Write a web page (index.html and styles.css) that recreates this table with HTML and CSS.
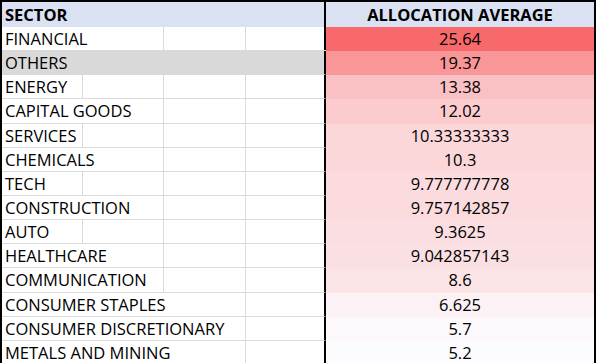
FILE: index.html
```html
<!DOCTYPE html>
<html>
<head>
<meta charset="utf-8">
<link rel="stylesheet" href="styles.css">
</head>
<body>
<div class="sheet">
  <div class="row head">
    <div class="left">
      <div class="cell span4 bold">SECTOR</div>
    </div>
    <div class="val bold">ALLOCATION AVERAGE</div>
  </div>

  <div class="row">
    <div class="left"><div class="cell span2">FINANCIAL</div><div class="cell c"></div><div class="cell d"></div></div>
    <div class="val" style="background:#F8696B">25.64</div>
  </div>
  <div class="row">
    <div class="left fill-gray"><div class="cell span4">OTHERS</div></div>
    <div class="val" style="background:#F99698">19.37</div>
  </div>
  <div class="row">
    <div class="left"><div class="cell a">ENERGY</div><div class="cell b"></div><div class="cell c"></div><div class="cell d"></div></div>
    <div class="val" style="background:#FAC1C4">13.38</div>
  </div>
  <div class="row">
    <div class="left"><div class="cell span2">CAPITAL GOODS</div><div class="cell c"></div><div class="cell d"></div></div>
    <div class="val" style="background:#FBCBCE">12.02</div>
  </div>
  <div class="row">
    <div class="left"><div class="cell a">SERVICES</div><div class="cell b"></div><div class="cell c"></div><div class="cell d"></div></div>
    <div class="val" style="background:#FBD7DA">10.33333333</div>
  </div>
  <div class="row">
    <div class="left"><div class="cell span2">CHEMICALS</div><div class="cell c"></div><div class="cell d"></div></div>
    <div class="val" style="background:#FBD7DA">10.3</div>
  </div>
  <div class="row">
    <div class="left"><div class="cell a">TECH</div><div class="cell b"></div><div class="cell c"></div><div class="cell d"></div></div>
    <div class="val" style="background:#FBDBDE">9.777777778</div>
  </div>
  <div class="row">
    <div class="left"><div class="cell span2">CONSTRUCTION</div><div class="cell c"></div><div class="cell d"></div></div>
    <div class="val" style="background:#FBDBDE">9.757142857</div>
  </div>
  <div class="row">
    <div class="left"><div class="cell a">AUTO</div><div class="cell b"></div><div class="cell c"></div><div class="cell d"></div></div>
    <div class="val" style="background:#FBDEE1">9.3625</div>
  </div>
  <div class="row">
    <div class="left"><div class="cell span2">HEALTHCARE</div><div class="cell c"></div><div class="cell d"></div></div>
    <div class="val" style="background:#FBE0E3">9.042857143</div>
  </div>
  <div class="row">
    <div class="left"><div class="cell span2">COMMUNICATION</div><div class="cell c"></div><div class="cell d"></div></div>
    <div class="val" style="background:#FBE4E6">8.6</div>
  </div>
  <div class="row">
    <div class="left"><div class="cell span3">CONSUMER STAPLES</div><div class="cell d"></div></div>
    <div class="val" style="background:#FCF2F5">6.625</div>
  </div>
  <div class="row">
    <div class="left"><div class="cell span3">CONSUMER DISCRETIONARY</div><div class="cell d"></div></div>
    <div class="val" style="background:#FCF8FB">5.7</div>
  </div>
  <div class="row">
    <div class="left"><div class="cell span3">METALS AND MINING</div><div class="cell d"></div></div>
    <div class="val" style="background:#FCFCFF">5.2</div>
  </div>
</div>
</body>
</html>
```

FILE: styles.css
```css
html, body {
  margin: 0;
  padding: 0;
  background: #ffffff;
}
body {
  width: 596px;
  height: 363px;
  overflow: hidden;
  font-family: "Open Sans", "Noto Sans", sans-serif;
  font-size: 16.5px;
  color: #000000;
}
.sheet {
  box-sizing: border-box;
  width: 596px;
  border-top: 2px solid #000000;
  border-left: 2px solid #000000;
  border-right: 2px solid #000000;
}
.row {
  display: flex;
  height: 24.15px;
}
.row.head {
  height: 25px;
  background: #D9E1F2;
}
.left {
  display: flex;
  width: 324px;
  flex: 0 0 324px;
}
.fill-gray {
  background: #D9D9D9;
  box-shadow: 0 -1px 0 #D9D9D9;
}
.cell {
  box-sizing: border-box;
  height: 100%;
  padding-left: 3px;
  white-space: nowrap;
  line-height: 24px;
  border-right: 1px solid #DADADA;
  border-bottom: 1px solid #DADADA;
}
.a, .b { flex: 0 0 81px; }
.c { flex: 0 0 82px; }
.d { flex: 0 0 80px; border-right: 2px solid #000000; }
.span2 { flex: 0 0 162px; }
.span3 { flex: 0 0 244px; }
.span4 {
  flex: 0 0 324px;
  border-right: 2px solid #000000;
  border-bottom: none;
}
.fill-gray .span4 {
  border-bottom: 1px solid #D9D9D9;
}
.head .cell {
  line-height: 25px;
}
.val {
  flex: 0 0 268px;
  height: 100%;
  text-align: center;
  line-height: 24px;
  white-space: nowrap;
}
.head .val {
  line-height: 25px;
}
.bold {
  font-weight: 700;
}
```
